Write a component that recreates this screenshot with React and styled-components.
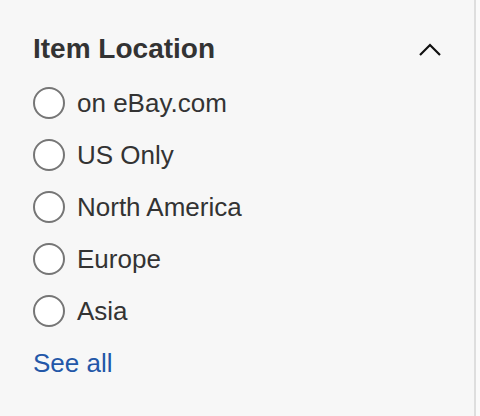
import React, { useState } from 'react'
import styled, { createGlobalStyle } from 'styled-components'

const GlobalStyle = createGlobalStyle`
  html, body {
    margin: 0;
    padding: 0;
    background: #fafafa;
  }
  body {
    font-family: "Liberation Sans", Arial, Helvetica, sans-serif;
  }
`

const Panel = styled.section`
  width: 476px;
  height: 416px;
  box-sizing: border-box;
  padding: 32px 0 0 33px;
  background: #f7f7f7;
  border-right: 2px solid #dedede;
  display: flex;
  flex-direction: column;
`

const Header = styled.div`
  display: flex;
  align-items: center;
  justify-content: space-between;
  width: 408px;
  height: 34px;
  margin-bottom: 11px;
`

const Title = styled.h3`
  margin: 0;
  font-size: 28px;
  line-height: 34px;
  font-weight: 700;
  color: #333333;
`

const Toggle = styled.button`
  border: 0;
  padding: 0;
  background: none;
  width: 22px;
  height: 14px;
  display: flex;
  align-items: center;
  justify-content: center;
  cursor: pointer;
`

const List = styled.div`
  display: flex;
  flex-direction: column;
`

const Option = styled.label`
  display: flex;
  align-items: center;
  gap: 12px;
  height: 52px;
  font-size: 26px;
  color: #333333;
  cursor: pointer;
`

const Radio = styled.span`
  width: 32px;
  height: 32px;
  box-sizing: border-box;
  border-radius: 50%;
  border: 2px solid #767676;
  background: #ffffff;
  display: flex;
  align-items: center;
  justify-content: center;
  flex-shrink: 0;

  &::after {
    content: '';
    width: 16px;
    height: 16px;
    border-radius: 50%;
    background: ${({ checked }) => (checked ? '#333333' : 'transparent')};
  }
`

const SeeAll = styled.a`
  display: flex;
  align-items: center;
  height: 52px;
  font-size: 26px;
  color: #2357a8;
  text-decoration: none;
  cursor: pointer;
`

const options = ['on eBay.com', 'US Only', 'North America', 'Europe', 'Asia']

export default function App() {
  const [selected, setSelected] = useState(null)

  return (
    <>
      <GlobalStyle />
      <Panel>
        <Header>
          <Title>Item Location</Title>
          <Toggle aria-label="Collapse">
            <svg width="22" height="13" viewBox="0 0 22 13">
              <path d="M1 12 L11 2 L21 12" fill="none" stroke="#111" strokeWidth="2.2" />
            </svg>
          </Toggle>
        </Header>
        <List>
          {options.map((label) => (
            <Option key={label} onClick={() => setSelected(label)}>
              <Radio checked={selected === label} />
              {label}
            </Option>
          ))}
          <SeeAll>See all</SeeAll>
        </List>
      </Panel>
    </>
  )
}
